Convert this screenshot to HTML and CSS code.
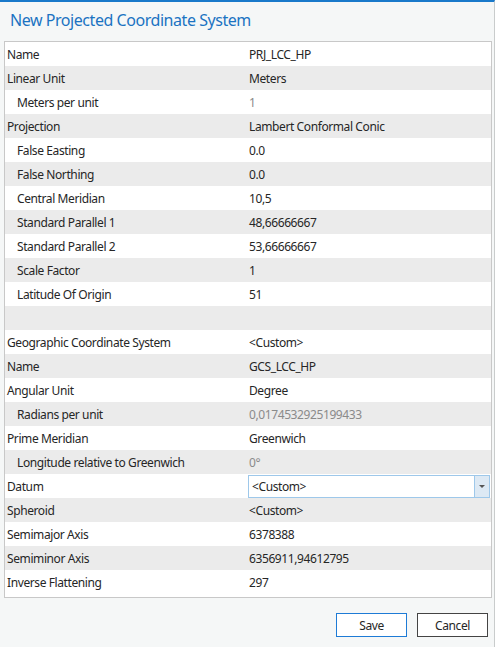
FILE: index.html
```html
<!DOCTYPE html>
<html lang="en">
<head>
  <meta charset="UTF-8">
  <title>New Projected Coordinate System</title>
  <link rel="stylesheet" href="styles.css">
</head>
<body>
<div class="dialog">
  <h1 class="title">New Projected Coordinate System</h1>

  <!-- Property grid -->
  <div class="props">
    <div class="row"><span class="label">Name</span><span class="value">PRJ_LCC_HP</span></div>
    <div class="row"><span class="label">Linear Unit</span><span class="value">Meters</span></div>
    <div class="row"><span class="label sub">Meters per unit</span><span class="value muted">1</span></div>
    <div class="row"><span class="label">Projection</span><span class="value">Lambert Conformal Conic</span></div>
    <div class="row"><span class="label sub">False Easting</span><span class="value">0.0</span></div>
    <div class="row"><span class="label sub">False Northing</span><span class="value">0.0</span></div>
    <div class="row"><span class="label sub">Central Meridian</span><span class="value">10,5</span></div>
    <div class="row"><span class="label sub">Standard Parallel 1</span><span class="value">48,66666667</span></div>
    <div class="row"><span class="label sub">Standard Parallel 2</span><span class="value">53,66666667</span></div>
    <div class="row"><span class="label sub">Scale Factor</span><span class="value">1</span></div>
    <div class="row"><span class="label sub">Latitude Of Origin</span><span class="value">51</span></div>
    <div class="row"><span class="label"></span><span class="value"></span></div>
    <div class="row"><span class="label">Geographic Coordinate System</span><span class="value">&lt;Custom&gt;</span></div>
    <div class="row"><span class="label">Name</span><span class="value">GCS_LCC_HP</span></div>
    <div class="row"><span class="label">Angular Unit</span><span class="value">Degree</span></div>
    <div class="row"><span class="label sub">Radians per unit</span><span class="value muted">0,0174532925199433</span></div>
    <div class="row"><span class="label">Prime Meridian</span><span class="value">Greenwich</span></div>
    <div class="row"><span class="label sub">Longitude relative to Greenwich</span><span class="value muted">0°</span></div>
    <div class="row">
      <span class="label">Datum</span>
      <span class="combo">
        <span class="combo-text">&lt;Custom&gt;</span>
        <span class="combo-arrow"></span>
      </span>
    </div>
    <div class="row"><span class="label">Spheroid</span><span class="value">&lt;Custom&gt;</span></div>
    <div class="row"><span class="label">Semimajor Axis</span><span class="value">6378388</span></div>
    <div class="row"><span class="label">Semiminor Axis</span><span class="value">6356911,94612795</span></div>
    <div class="row"><span class="label">Inverse Flattening</span><span class="value">297</span></div>
  </div>

  <div class="actions">
    <button class="btn primary">Save</button>
    <button class="btn">Cancel</button>
  </div>
</div>
</body>
</html>
```

FILE: styles.css
```css
/* Dialog shell */
body {
  margin: 0;
  font-family: "Noto Sans", "Open Sans", sans-serif;
  font-size: 12px;
  letter-spacing: -0.4px;
  color: #262626;
  background: #f5f7f7;
}
.dialog {
  width: 494px;
  height: 645px;
  border-top: 2px solid #1979ca;
  border-right: 1px solid #c9cccc;
  background: #f5f7f7;
}
.title {
  margin: 0;
  padding: 8px 0 0 10px;
  height: 31px;
  font-size: 16px;
  font-weight: normal;
  letter-spacing: -0.45px;
  color: #1b73c2;
  line-height: 20px;
}

/* Property grid */
.props {
  margin: 0 2px 0 4px;
  border: 1px solid #c8c8c8;
  background: #fff;
  padding-bottom: 3px;
}
.row {
  display: flex;
  align-items: center;
  height: 24px;
  background: #fff;
}
.row:nth-child(even) {
  background: #ebebeb;
}
.label {
  width: 242px;
  padding-left: 2px;
  flex-shrink: 0;
  white-space: nowrap;
}
.label.sub {
  padding-left: 12px;
  width: 232px;
}
.value {
  white-space: nowrap;
}
.muted {
  color: #8a8a8a;
}

/* Datum drop-down */
.combo {
  display: flex;
  width: 242px;
  height: 23px;
  margin-left: -1px;
  border: 1px solid #9ec8ea;
  background: #fff;
  box-sizing: border-box;
}
.combo-text {
  flex: 1;
  padding-left: 3px;
  line-height: 21px;
}
.combo-arrow {
  width: 14px;
  border-left: 1px solid #9ec8ea;
  background: #dde9f4;
  position: relative;
}
.combo-arrow::after {
  content: "";
  position: absolute;
  left: 4px;
  top: 9px;
  border-left: 3px solid transparent;
  border-right: 3px solid transparent;
  border-top: 3px solid #555;
}

/* Footer buttons */
.actions {
  display: flex;
  justify-content: flex-end;
  gap: 10px;
  padding: 15px 6px 0 0;
}
.btn {
  width: 71px;
  height: 24px;
  font-family: "Noto Sans", "Open Sans", sans-serif;
  font-size: 12px;
  letter-spacing: -0.4px;
  color: #262626;
  background: #fff;
  border: 1px solid #444;
  padding: 0;
}
.btn.primary {
  border-color: #1e7bd6;
}
```
